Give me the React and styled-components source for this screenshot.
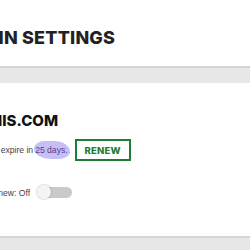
import React from 'react';
import styled, { createGlobalStyle } from 'styled-components';

const GlobalStyle = createGlobalStyle`
    html, body {
        margin: 0;
        padding: 0;
        background: #fff;
        overflow: hidden;
    }
`;

const Page = styled.div`
    width: 250px;
    height: 250px;
    overflow: hidden;
    background: #e7e7e7;
`;

const Header = styled.header`
    background: #fff;
    height: 66px;
    padding-top: 29px;
    box-sizing: border-box;
    overflow: hidden;
`;

const Title = styled.h1`
    margin: 0 0 0 -60px;
    font-family: Inter, 'Liberation Sans', sans-serif;
    font-weight: 800;
    font-size: 18px;
    line-height: 18px;
    letter-spacing: 0.2px;
    color: #222226;
    white-space: nowrap;
`;

const Band = styled.div`
    height: 15px;
    border-top: 2px solid #d5d5d5;
    background: #e7e7e7;
`;

const Card = styled.section`
    background: #fff;
    height: 153px;
    box-sizing: border-box;
    padding-top: 30px;
    overflow: hidden;
`;

const DomainName = styled.h2`
    margin: 0 0 0 -87px;
    font-family: Inter, 'Liberation Sans', sans-serif;
    font-weight: 800;
    font-size: 15px;
    line-height: 15px;
    color: #111;
    white-space: nowrap;
`;

const Row = styled.div`
    display: flex;
    align-items: center;
    gap: ${p => p.gap || 0}px;
    margin: ${p => p.top || 0}px 0 0 ${p => p.left || 0}px;
    font-family: 'Liberation Sans', Arial, sans-serif;
    font-size: 8.6px;
    color: #444;
    white-space: nowrap;
`;

const Highlight = styled.span`
    background: #c5bff6;
    color: #5b3e8f;
    padding: 4px 2px 4px 1px;
    margin-left: 1px;
    border-radius: 30% 45% 35% 50% / 45% 60% 40% 55%;
`;

const RenewButton = styled.button`
    width: 56px;
    height: 22px;
    border: 2px solid #1f7d35;
    background: #fff;
    color: #1f7d35;
    font-family: Inter, 'Liberation Sans', sans-serif;
    font-weight: 800;
    font-size: 9.5px;
    letter-spacing: 0.2px;
    padding: 0;
    box-sizing: border-box;
`;

const Toggle = styled.span`
    position: relative;
    display: inline-block;
    width: 34px;
    height: 11px;
    border-radius: 6px;
    background: #cacaca;
    margin-left: 8px;
`;

const Knob = styled.span`
    position: absolute;
    left: -1px;
    top: -2px;
    width: 14px;
    height: 14px;
    border-radius: 50%;
    background: #f4f4f4;
    box-shadow: 0 0 1px 1px rgba(0, 0, 0, 0.12);
`;

export default function App() {
    return (
        <Page>
            <GlobalStyle />
            <Header>
                <Title>DOMAIN SETTINGS</Title>
            </Header>
            <Band />
            <Card>
                <DomainName>MYDOMAINIS.COM</DomainName>
                <Row top={11} left={-64} gap={5}>
                    <span>
                        Your domain will expire in<Highlight>25 days.</Highlight>
                    </span>
                    <RenewButton>RENEW</RenewButton>
                </Row>
                <Row top={26} left={-30}>
                    <span>Auto-renew: Off</span>
                    <Toggle><Knob /></Toggle>
                </Row>
            </Card>
            <Band />
        </Page>
    );
}
